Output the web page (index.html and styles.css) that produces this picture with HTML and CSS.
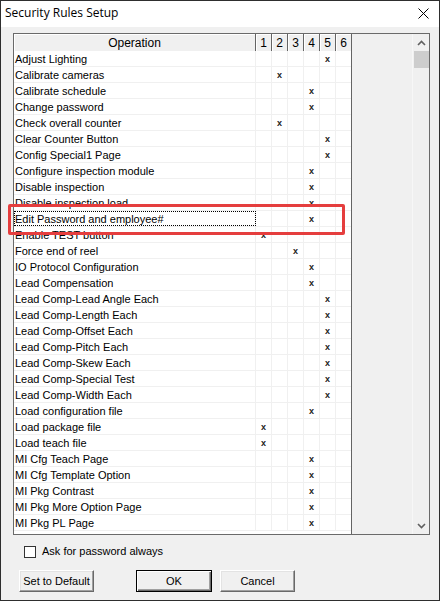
FILE: index.html
```html
<!DOCTYPE html>
<html>
<head>
<meta charset="utf-8">
<link rel="stylesheet" href="styles.css">
</head>
<body>
<div class="window">
  <div class="titlebar">
    <span class="title">Security Rules Setup</span>
    <svg class="close" width="11" height="11" viewBox="0 0 11 11"><path d="M0.5 0.5 L10.5 10.5 M10.5 0.5 L0.5 10.5" stroke="#000" stroke-width="1" fill="none"/></svg>
  </div>
  <div class="client">
    <div class="gridbox">
      <div class="table">
        <div class="hrow">
          <div class="hcell">Operation</div>
          <div class="hcell">1</div><div class="hcell">2</div><div class="hcell">3</div><div class="hcell">4</div><div class="hcell">5</div><div class="hcell last">6</div>
        </div>
        <div class="rows" id="rows"></div>
      </div>
      <div class="empty"></div>
      <div class="vscroll">
        <div class="sbtn"><svg width="9" height="6" viewBox="0 0 9 6"><path d="M1 5 L4.5 1.5 L8 5" stroke="#606060" stroke-width="1.6" fill="none"/></svg></div>
        <div class="thumb"></div>
        <div class="track"></div>
        <div class="sbtn"><svg width="9" height="6" viewBox="0 0 9 6"><path d="M1 1 L4.5 4.5 L8 1" stroke="#606060" stroke-width="1.6" fill="none"/></svg></div>
      </div>
    </div>
    <div class="options">
      <span class="checkbox"></span>
      <span class="label">Ask for password always</span>
    </div>
    <div class="buttons">
      <button class="btn">Set to Default</button>
      <button class="btn default ok">OK</button>
      <button class="btn cancel">Cancel</button>
    </div>
  </div>
  <div class="highlight"></div>
</div>
<script>
var data = [
["Adjust Lighting",5],["Calibrate cameras",2],["Calibrate schedule",4],["Change password",4],
["Check overall counter",2],["Clear Counter Button",5],["Config Special1 Page",5],
["Configure inspection module",4],["Disable inspection",4],["Disable inspection load",4],
["Edit Password and employee#",4],["Enable TEST button",1],["Force end of reel",3],
["IO Protocol Configuration",4],["Lead Compensation",4],["Lead Comp-Lead Angle Each",5],
["Lead Comp-Length Each",5],["Lead Comp-Offset Each",5],["Lead Comp-Pitch Each",5],
["Lead Comp-Skew Each",5],["Lead Comp-Special Test",5],["Lead Comp-Width Each",5],
["Load configuration file",4],["Load package file",1],["Load teach file",1],
["MI Cfg Teach Page",4],["MI Cfg Template Option",4],["MI Pkg Contrast",4],
["MI Pkg More Option Page",4],["MI Pkg PL Page",4]
];
var rows = document.getElementById('rows');
data.forEach(function(d, i){
  var r = document.createElement('div');
  r.className = 'row';
  var c = document.createElement('div');
  c.className = 'cell op' + (i === 10 ? ' focus' : '');
  c.textContent = d[0];
  r.appendChild(c);
  for (var k = 1; k <= 6; k++) {
    var m = document.createElement('div');
    m.className = 'cell mark' + (k === 6 ? ' last' : '');
    m.textContent = (k === d[1]) ? 'x' : '';
    r.appendChild(m);
  }
  rows.appendChild(r);
});
</script>
</body>
</html>
```

FILE: styles.css
```css
* { box-sizing: border-box; }
html, body { margin: 0; padding: 0; background: #f0f0f0; }
body { font-family: "Liberation Sans", Arial, sans-serif; font-size: 11px; color: #000; }

.window {
  position: relative;
  width: 440px;
  height: 601px;
  border: 1px solid #2e2e2e;
  background: #f0f0f0;
  overflow: hidden;
}

.titlebar {
  height: 26px;
  background: #fff;
  display: flex;
  align-items: center;
  justify-content: space-between;
  padding: 0 10px 3px 4px;
}
.title {
  font-family: "Open Sans", "Noto Sans", sans-serif;
  font-size: 12px;
  color: #000;
  line-height: 14px;
}
.close { display: block; margin-top: 2px; }

.client { padding: 6px 0 0 12px; }

.gridbox {
  width: 417px;
  height: 502px;
  border: 1px solid #6a6a6a;
  display: flex;
  background: #f0f0f0;
  overflow: hidden;
}

.table {
  width: 338px;
  height: 100%;
  border-right: 1px solid #646464;
  overflow: hidden;
  background: #fff;
  display: flex;
  flex-direction: column;
}

.hrow {
  display: grid;
  grid-template-columns: 242px repeat(5, 16px) 15px;
  height: 17px;
  border-bottom: 1px solid #646464;
  flex: none;
}
.hcell {
  background: #f0f0f0;
  border-right: 1px solid #646464;
  box-shadow: inset 1px 1px 0 #fff;
  font-size: 12px;
  line-height: 16px;
  padding-top: 1px;
  text-align: center;
}
.hcell.last { border-right: none; }

.rows { flex: 1; overflow: hidden; background: #fff; }
.row {
  display: grid;
  grid-template-columns: 242px repeat(5, 16px) 15px;
  height: 16px;
  border-bottom: 1px solid #f0f0f0;
  background: #fff;
}
.cell {
  border-right: 1px solid #f0f0f0;
  line-height: 15px;
  padding-top: 1px;
  white-space: nowrap;
  overflow: hidden;
}
.cell.last { border-right: none; }
.op { padding-left: 1px; }
.op.focus { outline: 1px dotted #000; outline-offset: -1px; }
.mark {
  text-align: center;
  font-size: 9px;
  font-weight: bold;
  line-height: 14px;
  color: #222;
}

.empty { width: 60px; height: 100%; background: #f0f0f0; }

.vscroll {
  width: 17px;
  height: 100%;
  display: flex;
  flex-direction: column;
  background: #f0f0f0;
  border-left: 1px solid #f7f7f7;
}
.sbtn {
  height: 17px;
  flex: none;
  display: flex;
  align-items: center;
  justify-content: center;
}
.sbtn svg { display: block; }
.thumb { height: 17px; flex: none; background: #cdcdcd; margin-left: 1px; }
.track { flex: 1; }

.options {
  display: flex;
  align-items: center;
  height: 13px;
  margin-top: 10px;
  padding-left: 11px;
}
.checkbox {
  width: 12px;
  height: 12px;
  border: 1px solid #333;
  background: #fff;
  flex: none;
}
.label { margin-left: 6px; line-height: 13px; }

.buttons {
  display: flex;
  margin-top: 12px;
  padding-left: 6px;
}
.btn {
  width: 75px;
  height: 22px;
  padding: 0;
  margin: 0;
  font-family: "Liberation Sans", Arial, sans-serif;
  font-size: 11px;
  color: #000;
  background: #f0f0f0;
  border: 1px solid;
  border-color: #fff #696969 #696969 #fff;
  box-shadow: inset -1px -1px 0 #a0a0a0, inset 1px 1px 0 #e3e3e3;
}
.btn.ok {
  width: 76px;
  margin-left: 42px;
  border: 1px solid #000;
  box-shadow: inset 1px 1px 0 #fff, inset -1px -1px 0 #696969, inset -2px -2px 0 #a0a0a0;
}
.btn.cancel { margin-left: 8px; }

.highlight {
  position: absolute;
  left: 7px;
  top: 203px;
  width: 337px;
  height: 31px;
  border: 3px solid #e53e3e;
  border-radius: 2px;
  pointer-events: none;
}
```
